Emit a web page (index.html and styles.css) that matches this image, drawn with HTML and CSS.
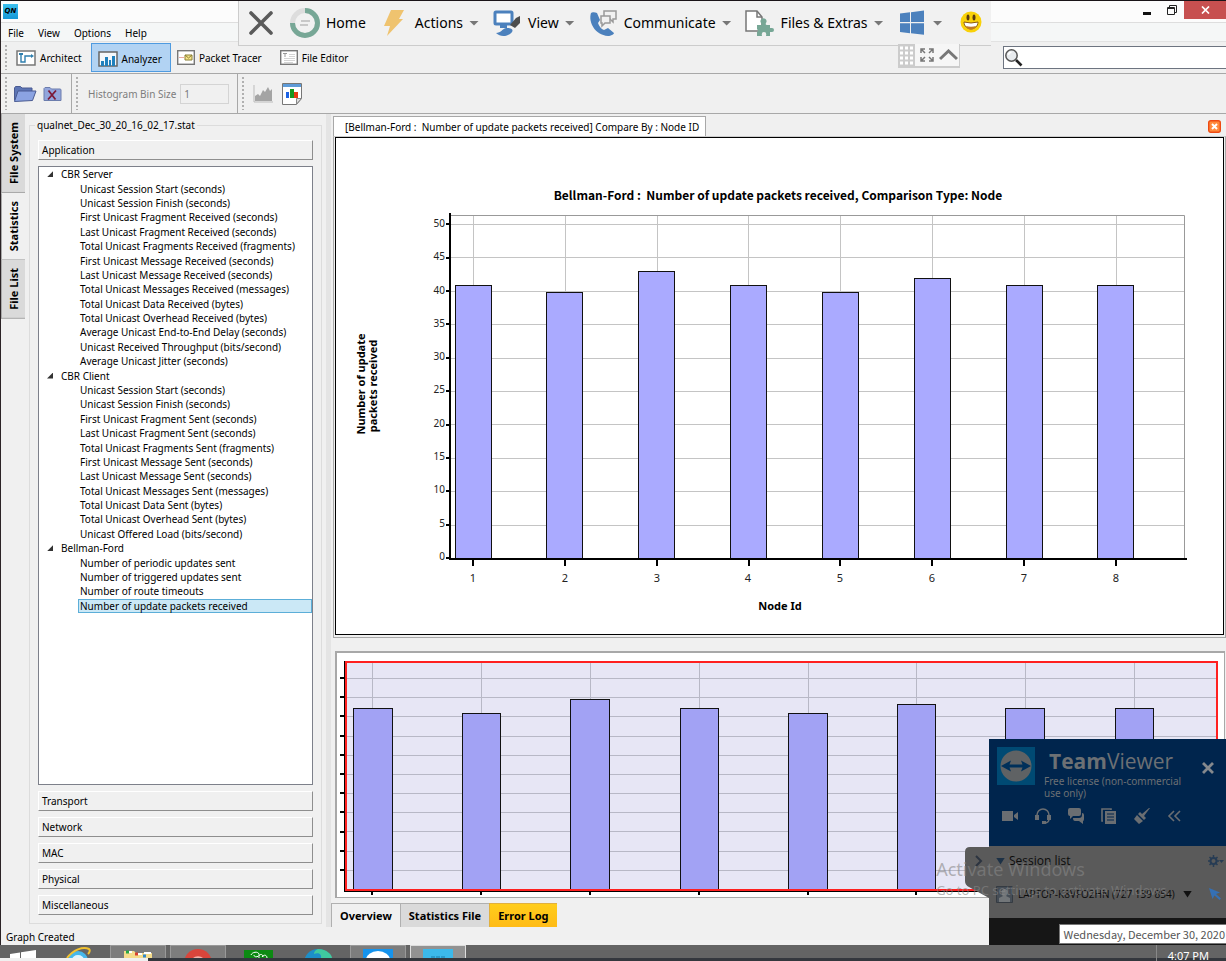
FILE: index.html
```html
<!DOCTYPE html>
<html lang="en">
<head>
<meta charset="utf-8">
<title>QualNet Analyzer</title>
<link rel="stylesheet" href="styles.css">
</head>
<body>
<div class="desktop">
<div class="window">
  <header class="titlebar">
    <span class="app-logo">QN</span>
    <div class="window-buttons">
      <button class="win-btn" aria-label="Minimize"><svg width="8" height="14" viewBox="0 0 8 14"><path d="M0 10.500h8" stroke="#111" stroke-width="3"/></svg></button>
      <button class="win-btn" aria-label="Restore"><svg width="10" height="10" viewBox="0 0 10 10"><path d="M2.500 2.500v-2h7v7h-2" fill="none" stroke="#222"/><path d="M.5 2.500h7v7h-7z M.5 3.500h7" fill="none" stroke="#222"/></svg></button>
      <button class="win-btn win-close" aria-label="Close"><svg width="9" height="8" viewBox="0 0 9 8"><path d="M1 .5l7 7M8 .5l-7 7" stroke="#fff" stroke-width="1.700"/></svg></button>
    </div>
  </header>
  <nav class="menubar">
    <button>File</button><button>View</button><button>Options</button><button>Help</button>
  </nav>
  <div class="modebar">
    <span class="grip"></span>
    <button class="mode mode-architect"><svg width="20" height="16" viewBox="0 0 20 16"><rect x="1" y="1" width="18" height="14" fill="#fff" stroke="#777" stroke-width="1.500"/><path d="M5 4v8h4V6h7" fill="none" stroke="#2f7fae" stroke-width="1.400"/><path d="M3 3h4v2H3zM15 4l3 2-3 2z" fill="#2f7fae"/></svg>Architect</button>
    <button class="mode mode-active"><svg width="20" height="16" viewBox="0 0 20 16"><rect x="1" y="1" width="18" height="14" fill="#f4f8fb" stroke="#666" stroke-width="1.500"/><path d="M3 10h3v5H3zM7 6h3v9H7zM11 9h2v6h-2zM14 5h3v10h-3z" fill="#1f80bd"/></svg>Analyzer</button>
    <button class="mode"><svg width="18" height="15" viewBox="0 0 18 15"><rect x=".7" y=".7" width="16.600" height="13.600" fill="#fff" stroke="#777" stroke-width="1.400"/><path d="M2 7.500h5" stroke="#e9a9a0"/><path d="M8 5h7v5H8z" fill="#f6e58a" stroke="#8a7f35"/><path d="M8 5l3.500 3L15 5" fill="none" stroke="#8a7f35"/></svg>Packet Tracer</button>
    <button class="mode mode-editor"><svg width="18" height="15" viewBox="0 0 18 15"><rect x=".7" y=".7" width="16.600" height="13.600" fill="#fff" stroke="#777" stroke-width="1.400"/><path d="M3 3.500h4M5 3.500V7" stroke="#999"/><path d="M9 4.500h6M9 6.500h6M4 8.500h11M4 10.500h11M4 12.500h9" stroke="#d4d4d4"/></svg>File Editor</button>
    <label class="search" aria-label="Search">
      <svg width="19" height="19" viewBox="0 0 19 19"><path d="M12 12l5.500 5.500" stroke="#222" stroke-width="2.600"/><circle cx="7.500" cy="7.500" r="5.700" fill="#e8ebee" stroke="#555" stroke-width="1.500"/><path d="M4.500 7a3.200 3.200 0 0 1 3-2.800" fill="none" stroke="#fff" stroke-width="1.500"/></svg>
      <input type="text">
    </label>
  </div>
  <div class="toolbar">
    <div class="tool-group tool-files">
      <span class="grip"></span>
      <button class="tool" aria-label="Open folder"><svg width="24" height="18" viewBox="0 0 24 18"><path d="M1.500 15.500V3l1-1.500h5L9 3h10v3" fill="#5d75b5" stroke="#4a5b92"/><path d="M1.500 16.500L5 6h18l-3.500 9.500z" fill="#8ba3e2" stroke="#4a5b92"/></svg></button>
      <button class="tool" aria-label="Close folder"><svg width="19" height="16" viewBox="0 0 19 16"><path d="M1 14.500V2.500L2 1.500h5l1.500 1.500H17a1 1 0 0 1 1 1v10.500z" fill="#93a5dc" stroke="#6c7dad"/><path d="M5.500 4.500l7 9M13 4.500l-8 9" stroke="#7c1a38" stroke-width="1.800"/></svg></button>
    </div>
    <div class="tool-group tool-bins">
      <span class="grip"></span>
      <label for="bins">Histogram Bin Size</label>
      <input id="bins" class="bins" type="text" value="1" disabled>
    </div>
    <div class="tool-group tool-charts">
      <span class="grip"></span>
      <button class="tool" aria-label="Area chart"><svg width="20" height="18" viewBox="0 0 20 18"><path d="M1 0v17h19" fill="none" stroke="#bbb"/><path d="M2 16v-5l3-2 2 2 3-6 2 2 3-5 2 4 2-2v12z" fill="#a4a4a4"/></svg></button>
      <button class="tool" aria-label="Bar chart report"><svg width="20" height="22" viewBox="0 0 20 22"><path d="M.5.500h19v15l-5 6H.5z" fill="#fff" stroke="#777"/><path d="M1 1h18v3H1z" fill="#5e9bd8"/><path d="M4 9h3v6H4z" fill="#1c62e4"/><path d="M8 6h4v9H8z" fill="#15961f"/><path d="M12 9h4v6h-4z" fill="#e33a12"/><path d="M14.500 21v-5.500h5z" fill="#ddd" stroke="#888"/></svg></button>
    </div>
  </div>

  <main class="workspace">
    <div class="side-tabs">
      <button>File System</button>
      <button class="side-on">Statistics</button>
      <button>File List</button>
    </div>
    <fieldset class="stats">
      <legend>qualnet_Dec_30_20_16_02_17.stat</legend>
      <button class="layer">Application</button>
      <div class="tree-box">
        <ul class="tree">
          <li><span class="branch">CBR Server</span>
            <ul>
              <li><span>Unicast Session Start (seconds)</span></li>
              <li><span>Unicast Session Finish (seconds)</span></li>
              <li><span>First Unicast Fragment Received (seconds)</span></li>
              <li><span>Last Unicast Fragment Received (seconds)</span></li>
              <li><span>Total Unicast Fragments Received (fragments)</span></li>
              <li><span>First Unicast Message Received (seconds)</span></li>
              <li><span>Last Unicast Message Received (seconds)</span></li>
              <li><span>Total Unicast Messages Received (messages)</span></li>
              <li><span>Total Unicast Data Received (bytes)</span></li>
              <li><span>Total Unicast Overhead Received (bytes)</span></li>
              <li><span>Average Unicast End-to-End Delay (seconds)</span></li>
              <li><span>Unicast Received Throughput (bits/second)</span></li>
              <li><span>Average Unicast Jitter (seconds)</span></li>
            </ul></li>
          <li><span class="branch">CBR Client</span>
            <ul>
              <li><span>Unicast Session Start (seconds)</span></li>
              <li><span>Unicast Session Finish (seconds)</span></li>
              <li><span>First Unicast Fragment Sent (seconds)</span></li>
              <li><span>Last Unicast Fragment Sent (seconds)</span></li>
              <li><span>Total Unicast Fragments Sent (fragments)</span></li>
              <li><span>First Unicast Message Sent (seconds)</span></li>
              <li><span>Last Unicast Message Sent (seconds)</span></li>
              <li><span>Total Unicast Messages Sent (messages)</span></li>
              <li><span>Total Unicast Data Sent (bytes)</span></li>
              <li><span>Total Unicast Overhead Sent (bytes)</span></li>
              <li><span>Unicast Offered Load (bits/second)</span></li>
            </ul></li>
          <li><span class="branch">Bellman-Ford</span>
            <ul>
              <li><span>Number of periodic updates sent</span></li>
              <li><span>Number of triggered updates sent</span></li>
              <li><span>Number of route timeouts</span></li>
              <li><span class="picked">Number of update packets received</span></li>
            </ul></li>
        </ul>
      </div>
      <button class="layer">Transport</button>
      <button class="layer">Network</button>
      <button class="layer">MAC</button>
      <button class="layer">Physical</button>
      <button class="layer">Miscellaneous</button>
    </fieldset>
    <div class="splitter"></div>

    <section class="graphs">
      <div class="graph-tabs">
        <button class="graph-tab">[Bellman-Ford :&nbsp; Number of update packets received] Compare By : Node ID</button>
        <button class="graph-close" aria-label="Close graph"><svg width="13" height="13" viewBox="0 0 13 13"><rect x=".7" y=".7" width="11.600" height="11.600" rx="2" fill="#ff8a3c" stroke="#ee4a12" stroke-width="1.400"/><path d="M4 4l5 5M9 4l-5 5" stroke="#fff" stroke-width="2"/></svg></button>
      </div>
      <div class="graph-frame">
        <svg class="chart" viewBox="336 138 887 496" role="img" aria-label="Update packets received by node">
          <g class="grid">
            <path d="M451 224.500H1184M451 257.500H1184M451 291.500H1184M451 324.500H1184M451 358.500H1184M451 391.500H1184M451 424.500H1184M451 458.500H1184M451 491.500H1184M451 525.500H1184"/>
            <path d="M473.500 216V558M565.500 216V558M657.500 216V558M748.500 216V558M840.500 216V558M932.500 216V558M1024.500 216V558M1116.500 216V558"/>
          </g>
          <path class="plot-edge" d="M451 215.500H1184.500V558"/>
          <g class="bars">
            <rect x="455.500" y="285.500" width="36" height="273"/><rect x="546.500" y="292.500" width="36" height="266"/><rect x="638.500" y="271.500" width="36" height="287"/><rect x="730.500" y="285.500" width="36" height="273"/><rect x="822.500" y="292.500" width="36" height="266"/><rect x="914.500" y="278.500" width="36" height="280"/><rect x="1006.500" y="285.500" width="36" height="273"/><rect x="1097.500" y="285.500" width="36" height="273"/>
          </g>
          <path class="axis" d="M450 213V560M449 559H1187M446 224H450M446 258H450M446 291H450M446 324H450M446 358H450M446 391H450M446 425H450M446 458H450M446 491H450M446 525H450M446 558H450M473 559V566M565 559V566M657 559V566M749 559V566M840 559V566M932 559V566M1024 559V566M1116 559V566"/>
          <g class="ticks ticks-y">
            <text x="445" y="227">50</text><text x="445" y="260">45</text><text x="445" y="294">40</text><text x="445" y="327">35</text><text x="445" y="360">30</text><text x="445" y="393">25</text><text x="445" y="427">20</text><text x="445" y="460">15</text><text x="445" y="493">10</text><text x="445" y="527">5</text><text x="445" y="560">0</text>
          </g>
          <g class="ticks">
            <text x="473" y="582">1</text><text x="565" y="582">2</text><text x="657" y="582">3</text><text x="748" y="582">4</text><text x="840" y="582">5</text><text x="932" y="582">6</text><text x="1024" y="582">7</text><text x="1116" y="582">8</text>
          </g>
          <g class="titles">
            <text class="chart-title" x="778" y="200">Bellman-Ford :&#160; Number of update packets received, Comparison Type: Node</text>
            <text x="780" y="610">Node Id</text>
            <text transform="rotate(-90)" x="-384" y="365">Number of update</text>
            <text transform="rotate(-90)" x="-386" y="377">packets received</text>
          </g>
        </svg>
      </div>
      <div class="overview">
        <svg class="chart" viewBox="337 653 887 244" role="img" aria-label="Graph overview">
          <path class="shade" d="M346 662H1217V889H346z"/>
          <g class="grid">
            <path d="M346 678.500H1217M346 697.500H1217M346 716.500H1217M346 736.500H1217M346 755.500H1217M346 774.500H1217M346 793.500H1217M346 812.500H1217M346 831.500H1217M346 851.500H1217M346 870.500H1217"/>
            <path d="M372.500 662V889M481.500 662V889M590.500 662V889M699.500 662V889M808.500 662V889M916.500 662V889M1025.500 662V889M1134.500 662V889"/>
          </g>
          <g class="bars bars-dim">
            <rect x="353.500" y="708.500" width="39" height="181"/><rect x="462.500" y="713.500" width="38" height="176"/><rect x="570.500" y="699.500" width="39" height="190"/><rect x="680.500" y="708.500" width="38" height="181"/><rect x="788.500" y="713.500" width="39" height="176"/><rect x="897.500" y="704.500" width="38" height="185"/><rect x="1005.500" y="708.500" width="39" height="181"/><rect x="1115.500" y="708.500" width="38" height="181"/>
          </g>
          <path class="axis" d="M345 661V891H1217M340 678H345M340 697H345M340 716H345M340 736H345M340 755H345M340 774H345M340 793H345M340 812H345M340 832H345M340 851H345M340 870H345M372 890V895M481 890V895M590 890V895M699 890V895M808 890V895M916 890V895"/>
          <rect class="view-range" x="346" y="662" width="871" height="228"/>
        </svg>
      </div>
      <div class="bottom-tabs">
        <button class="bottom-on">Overview</button><button>Statistics File</button><button class="bottom-alert">Error Log</button>
      </div>
    </section>
  </main>
  <footer class="status">Graph Created</footer>
</div>

<div class="taskbar">
  <button class="task" aria-label="Start"><svg width="28" height="12" viewBox="0 0 28 12"><path d="M1 8l10-1.500V12H1zM12 6.300L27 4v8H12z" fill="#fff"/></svg></button>
  <button class="task" aria-label="Internet Explorer"><svg width="28" height="12" viewBox="0 0 28 12"><circle cx="14" cy="15" r="10" fill="#45b7ea"/><path d="M8 14a6 5 0 0 1 12 0z" fill="#dff3fc"/><path d="M3 12C9 4 19 0 25 3c2 2-1 5-1 5" fill="none" stroke="#f2c230" stroke-width="2"/></svg></button>
  <button class="task task-open" aria-label="File Explorer"><svg width="32" height="9" viewBox="0 3 32 9"><path d="M2 12V5h10l2 2h16v5z" fill="#f5dc8b"/><path d="M4 6h6M15 8h5M22 7h7" stroke="#fff" stroke-width="2"/><path d="M4 6h3" stroke="#27a845" stroke-width="3"/><path d="M13 8h3" stroke="#d8412f" stroke-width="3"/><path d="M21 10h3" stroke="#3288cc" stroke-width="3"/></svg></button>
  <button class="task task-open" aria-label="Browser"><svg width="28" height="10" viewBox="0 2 28 10"><circle cx="14" cy="17" r="14" fill="#d9453b"/><path d="M9 12a6 4 0 0 1 10 0z" fill="#f2b3ac"/></svg></button>
  <button class="task" aria-label="Notes"><svg width="29" height="12" viewBox="0 0 29 12"><path d="M0 4h29v8H0z" fill="#0c8a12"/><path d="M7 9c1-3 7-4 8-1s-5 4-5 1M15 12c-1-4 4-5 4-1M18 11c2-3 5-2 5 1" fill="none" stroke="#fff"/></svg></button>
  <button class="task" aria-label="Edge"><svg width="29" height="12" viewBox="0 0 29 12"><circle cx="14" cy="17" r="14" fill="#1c8fc9"/><path d="M14 3c9 0 14 6 14 9H17c1-4-3-6-7-4 0-2 1-4 4-5z" fill="#3fc9a0"/></svg></button>
  <button class="task task-open" aria-label="TeamViewer"><svg width="30" height="10" viewBox="0 2 30 10"><path d="M0 3h30v9H0z" fill="#1593ec"/><ellipse cx="15" cy="14" rx="12" ry="9" fill="#fff"/></svg></button>
  <button class="task task-open task-front" aria-label="QualNet"><svg width="30" height="10" viewBox="0 2 30 10"><path d="M0 3h30v9H0z" fill="#3cb9ea"/><path d="M8 11h14" stroke="#2a9bcb" stroke-width="2" stroke-dasharray="4 1"/></svg></button>
  <time class="clock">4:07 PM</time>
</div>

<div class="session-bar">
  <button class="sess sess-end" aria-label="Close session"><svg viewBox="0 0 24 24"><path d="M2 2l20 20M22 2L2 22" stroke="#5a5a5a" stroke-width="3.600" stroke-linecap="round"/></svg></button>
  <button class="sess"><svg class="sess-icon" viewBox="0 0 30 30"><circle cx="15" cy="15" r="12.500" fill="none" stroke="#ddd" stroke-width="5"/><path d="M15 2.500A12.500 12.500 0 1 1 2.500 15" fill="none" stroke="#77a796" stroke-width="5"/><path d="M11 13h9M10 17h8" stroke="#bbb" stroke-width="1.500"/></svg>Home</button>
  <button class="sess"><svg class="sess-icon" viewBox="0 0 30 30"><path d="M12 2h13l-5 9h4L8 28l3-10H5z" fill="#efc36f"/></svg>Actions<i class="caret"></i></button>
  <button class="sess"><svg class="sess-icon" viewBox="0 0 30 30"><rect x="3" y="4" width="17" height="12" rx="1" fill="#fff" stroke="#4c81bd" stroke-width="3"/><path d="M8 17h7v3H8z" fill="#4c81bd"/><path d="M4 25c5 0 6-4 10-5 4-.5 8 1 6 4-3 4-11 6-16 1z" fill="#4c81bd"/><path d="M18 17l6-7 4-2v7l-5 5z" fill="#4d4d4d"/></svg>View<i class="caret"></i></button>
  <button class="sess"><svg class="sess-icon" viewBox="0 0 30 30"><path d="M3 5c-3 9 4 22 17 23 3 0 6-2 6-3l-6-5-4 2c-3-1-5-4-6-7l2-3-3-7c-2-1-5-1-6 0z" fill="#4c81bd"/><path d="M16 3h12v8h-3v3l-3-3h-6z" fill="#f1f1f1" stroke="#999" stroke-width="1.500"/><path d="M13 8h9v7h-5l-3 3v-3h-1z" fill="#f1f1f1" stroke="#999" stroke-width="1.500"/></svg>Communicate<i class="caret"></i></button>
  <button class="sess"><svg class="sess-icon" viewBox="0 0 30 30"><path d="M1 3h11l5 6v14H1z" fill="#fff" stroke="#777" stroke-width="1.500"/><path d="M12 3v6h5" fill="none" stroke="#777" stroke-width="1.500"/><path d="M12 17h4q1 0 0-2a3 3 0 1 1 5 0q-1 2 1 2h3v3h2a2 2 0 1 1 0 4h-2v4h-4q1-4-2-4t-2 4h-5v-4q2-1 0-3z" fill="#77a796"/></svg>Files &amp; Extras<i class="caret"></i></button>
  <button class="sess" aria-label="Windows keys"><svg class="sess-icon" viewBox="0 0 30 30"><path d="M3 5.500l10-1.200V14H3zM14 4.200L27 2.500V14H14zM3 15.200h10v10L3 24zM14 15.200h13v11.500l-13-1.500z" fill="#4c81bd"/></svg><i class="caret"></i></button>
  <button class="sess" aria-label="Feedback"><svg class="sess-icon" viewBox="0 0 30 30"><circle cx="15" cy="14" r="10.500" fill="#f9d108"/><ellipse cx="12" cy="9.500" rx="1.500" ry="3" fill="#5a3a10"/><ellipse cx="18" cy="9.500" rx="1.500" ry="3" fill="#5a3a10"/><path d="M8 14q7 2 14 0c0 9-14 9-14 0z" fill="#fff" stroke="#8a5a14"/><path d="M10 18c3 1 7 1 10 0-2 5-8 5-10 0z" fill="#c07a20"/></svg></button>
  <div class="session-pins">
    <svg width="17" height="22" viewBox="0 0 17 22"><path d="M0 0h17v22H0z" fill="#ccc"/><path d="M2 4h13M2 9h13M2 14h13M2 19h13" stroke="#fff" stroke-width="3" stroke-dasharray="3 2"/></svg>
    <svg width="14" height="14" viewBox="0 0 14 14"><path d="M1 5V1h4M9 1h4v4M13 9v4H9M5 13H1V9M1 1l4 4M13 1L9 5M13 13L9 9M1 13l4-4" fill="none" stroke="#777" stroke-width="1.500"/></svg>
    <svg width="19" height="12" viewBox="0 0 19 12"><path d="M1 10l8.500-8L18 10" fill="none" stroke="#777" stroke-width="3"/></svg>
  </div>
</div>

<aside class="tv">
  <button class="tv-handle" aria-label="Collapse panel"><svg width="24" height="52" viewBox="0 0 24 52"><path d="M24 0H5Q0 0 0 5V34q0 4 4 6l20 11z" fill="#5a5a5a"/><path d="M11 9l5 5-5 5" fill="none" stroke="#2c3440" stroke-width="2"/></svg></button>
  <div class="tv-head">
    <svg class="tv-logo" width="38" height="38" viewBox="0 0 38 38"><path d="M0 0h38v38H0z" fill="#004a73"/><circle cx="19" cy="19" r="15.500" fill="#5f6264"/><path d="M4 19l10-5.500-1.500 4h13L24 13.500 34 19l-10 5.500 1.500-4h-13l1.500 4z" fill="#00305a"/></svg>
    <div class="tv-name"><h2><b>Team</b>Viewer</h2><p>Free license (non-commercial use only)</p></div>
    <button class="tv-close" aria-label="Close"><svg width="12" height="12" viewBox="0 0 12 12"><path d="M1 1l10 10M11 1L1 11" stroke="#85898d" stroke-width="2.800"/></svg></button>
    <div class="tv-tools">
      <svg viewBox="0 0 18 18"><path d="M1 4h11v10H1zM13 8l4-3v8l-4-3z" fill="#6a6e72"/></svg>
      <svg viewBox="0 0 18 18"><path d="M3 11V8a6 6 0 0 1 12 0v4q0 4-5 4" fill="none" stroke="#6a6e72" stroke-width="1.500"/><path d="M1 8h4v5H1zM13 8h4v5h-4zM8 14h4v3H8z" fill="#6a6e72"/></svg>
      <svg viewBox="0 0 18 18"><path d="M3 1h9q2 0 2 2v4q0 2-2 2H6l-3 3V9Q1 9 1 7V3q0-2 2-2z" fill="#6a6e72"/><path d="M15 6q2 0 2 2v4q0 2-1 2v3l-4-3H8q-2 0-2-3h6q3 0 3-3z" fill="#6a6e72"/></svg>
      <svg viewBox="0 0 18 18"><path d="M3 14H2V2h9v1" fill="none" stroke="#6a6e72" stroke-width="1.600"/><path d="M5 4h11v13H5z" fill="#6a6e72"/><path d="M7 7h7M7 10h7M7 13h7" stroke="#00254d"/></svg>
      <svg viewBox="0 0 18 18"><path d="M17 1l-6 8 2 2-2 2-6-6 2-2 2 2 7-6zM4 8l6 6-4 3-5-5z" fill="#6a6e72"/></svg>
      <svg viewBox="0 0 18 18"><path d="M8 4l-5 5 5 5M14 4L9 9l5 5" fill="none" stroke="#6a6e72" stroke-width="1.600"/></svg>
    </div>
  </div>
  <div class="tv-body">
    <div class="tv-row"><i class="tri"></i><span class="tv-list">Session list</span><svg width="16" height="12" viewBox="0 0 16 12"><circle cx="5.500" cy="6" r="3" fill="none" stroke="#273c54" stroke-width="2"/><path d="M5.500 0v3M5.500 9v3M0 6h2M8 6h3M1.500 2l2 2M9.500 2l-2 2M1.500 10l2-2M9.500 10l-2-2" stroke="#273c54" stroke-width="1.500"/><path d="M11 5h5l-2.500 3z" fill="#273c54"/></svg></div>
    <div class="tv-row tv-peer"><svg width="17" height="17" viewBox="0 0 17 17"><path d="M.5.500h16v16H.5z" fill="#454d56" stroke="#353b42"/><path d="M8.500 3c5 0 3 6 1.500 7l4 2v4H3v-4l4-2C5.500 9 4 3 8.500 3z" fill="#727679"/></svg><span class="tv-host">LAPTOP-K8VFO2HN (727 139 854)</span><i class="tri tri-dark"></i><svg width="12" height="12" viewBox="0 0 12 12"><path d="M0 0l11 4.500-4 1.500 5 4.500-1.500 1.500L5.500 7.500 3.500 11z" fill="#3570b5"/></svg></div>
  </div>
  <div class="tv-foot"></div>
</aside>
<div class="activation"><strong>Activate Windows</strong><span>Go to PC settings to activate Windows.</span></div>
<div class="date-tip">Wednesday, December 30, 2020</div>
</div>
</body>
</html>
```
FILE: styles.css
```css
* { box-sizing: border-box; }

body {
  margin: 0;
  background: #34373d;
  color: #000;
  font: 10px/14px "Noto Sans", "Open Sans", sans-serif;
}

button, input {
  margin: 0;
  padding: 0;
  border: 0;
  background: none;
  color: inherit;
  font: inherit;
}

svg { display: block; flex: none; }

.desktop {
  position: relative;
  min-height: 100vh;
  display: flex;
  flex-direction: column;
  overflow: hidden;
}

.window {
  flex: 1;
  display: flex;
  flex-direction: column;
  background: #f0f0f0;
  border-top: 1px solid #1a1418;
  border-left: 1px solid #2b2326;
}

/* Title and menus */
.titlebar {
  display: flex;
  justify-content: space-between;
  align-items: flex-start;
  height: 22px;
  background: #fcfcfc;
  border-bottom: 1px solid #dedede;
}

.app-logo {
  margin: 3px 0 0 2px;
  width: 15px;
  height: 15px;
  background: linear-gradient(#3cc0ee, #1597d6);
  font: italic bold 7px/15px "DejaVu Sans", sans-serif;
  text-align: center;
}

.window-buttons { display: flex; }

.win-btn {
  width: 25px;
  height: 18px;
  display: flex;
  align-items: center;
  justify-content: center;
}

.win-close { width: 42px; background: #c75050; }

.menubar {
  display: flex;
  gap: 14px;
  height: 19px;
  padding: 1px 0 0 7px;
  background: #f5f7f7;
  border-bottom: 1px solid #e2e2e2;
}

.modebar {
  display: flex;
  align-items: center;
  height: 32px;
  padding-left: 4px;
  border-bottom: 1px solid #a8a8a8;
}

.grip {
  width: 2px;
  align-self: stretch;
  margin: 3px 0;
  background: repeating-linear-gradient(#b0b0b0 0 2px, transparent 2px 4px);
}

.mode {
  height: 29px;
  display: flex;
  align-items: center;
  gap: 4px;
  padding: 0 6px;
  white-space: nowrap;
}

.mode-architect { padding: 0 9px; }
.mode-active { background: #b2d3f3; border: 1px solid #4f9be0; padding: 2px 8px 0 6px; }
.mode-editor { padding-left: 12px; }

.search {
  display: flex;
  align-items: center;
  margin-left: auto;
  width: 223px;
  height: 23px;
  border: 1px solid #6d7480;
  border-right: 0;
  background: #fff;
}

.search input { flex: 1; min-width: 0; height: 100%; outline: 0; }

.toolbar { display: flex; height: 40px; border-bottom: 1px solid #a8a8a8; }

.tool-group {
  display: flex;
  align-items: center;
  padding-left: 4px;
  border-right: 1px solid #a8a8a8;
}

.tool-files { gap: 6px; padding-right: 9px; }
.tool-bins { gap: 4px; padding: 0 8px 0 4px; color: #7d7d7d; }
.tool-bins label { margin-left: 6px; }
.tool-charts { gap: 9px; border-right: 0; }

.bins {
  width: 49px;
  height: 20px;
  padding-left: 3px;
  border: 1px solid #d4d4d4;
  color: #777;
}

/* Workspace */
.workspace { flex: 1; display: flex; min-height: 0; }

.side-tabs { width: 24px; display: flex; flex-direction: column; }

.side-tabs button {
  writing-mode: vertical-rl;
  transform: rotate(180deg);
  width: 24px;
  padding: 8px 5px;
  background: #dadada;
  border: 1px solid #a9a9a9;
  border-width: 1px 1px 0 0;
  font-size: 11px;
  font-weight: bold;
}

.side-tabs .side-on { background: #f0f0f0; }

.stats {
  width: 293px;
  min-width: 0;
  margin: 4px 0 3px 4px;
  padding: 8px;
  border: 1px solid #dcdcdc;
  display: flex;
  flex-direction: column;
  gap: 6px;
}

.stats legend { padding: 0 2px; margin-left: -3px; }

.layer {
  height: 20px;
  padding-left: 3px;
  text-align: left;
  border: 1px solid #fff;
  border-right-color: #8e8e8e;
  border-bottom-color: #8e8e8e;
}

.tree-box { flex: 1; background: #fff; border: 1px solid #7d808a; }

.tree {
  height: 446px;
  display: grid;
  grid-auto-rows: 1fr;
}

.tree, .tree ul { list-style: none; margin: 0; padding: 0; }
.tree li, .tree ul { display: contents; }

.tree span {
  display: flex;
  align-items: center;
  margin-left: 39px;
  padding-left: 2px;
  white-space: nowrap;
}

.tree .branch { margin-left: 8px; gap: 8px; padding: 0; }

.branch::before {
  content: "";
  width: 6px;
  height: 6px;
  background: #333;
  clip-path: polygon(100% 0, 100% 100%, 0 100%);
}

.tree .picked { background: #cbe8f6; box-shadow: inset 0 0 0 1px #5caed8; }

.splitter { width: 5px; margin: 0 2px 0 4px; background: #e4e4e4; }

.graphs { flex: 1; min-width: 0; display: flex; flex-direction: column; padding-top: 2px; }

.graph-tabs { display: flex; justify-content: space-between; padding-right: 5px; }

.graph-tab {
  height: 20px;
  padding: 0 6px 0 11px;
  background: #fff;
  border: 1px solid #a8a8a8;
  border-bottom: 0;
  white-space: nowrap;
}

.graph-close { display: flex; align-items: center; }

.graph-frame {
  border: 1px solid #a8a8a8;
  border-top-color: #ccc;
  padding: 0 1px 2px;
}

.graph-frame .chart { border: 1px solid #000; background: #fff; }

.chart { width: 100%; height: auto; }

.grid path { fill: none; stroke: #c4c4c4; }
.plot-edge { fill: none; stroke: #999; }
.bars rect { fill: #aaaaff; stroke: #111; }
.bars-dim rect { fill: #a2a2f4; }
.axis { fill: none; stroke: #000; stroke-width: 2; }
.shade { fill: #e7e6f5; }
.overview .grid path { stroke: #b8b8c6; }
.view-range { fill: none; stroke: #ff2020; stroke-width: 2; }
.ticks { text-anchor: middle; fill: #222; font-size: 11px; }
.ticks-y { text-anchor: end; font-size: 10px; }
.titles { text-anchor: middle; font-size: 11px; font-weight: bold; }
.chart-title { font: bold 12px "Noto Sans CJK SC", "Noto Sans", sans-serif; }

.overview {
  margin: 13px 1px 5px 2px;
  border: 2px solid #a8a8a8;
  border-width: 2px 1px 1px 2px;
  background: #fff;
}

.bottom-tabs { display: flex; margin-left: -2px; }

.bottom-tabs button {
  height: 24px;
  padding: 0 8px;
  background: #dadada;
  border: 1px solid #b0b0b0;
  border-width: 1px 0 0 1px;
  font-size: 11px;
  font-weight: bold;
}

.bottom-tabs .bottom-on { background: #f0f0f0; }
.bottom-tabs .bottom-alert { background: linear-gradient(#ffcd1c, #ffbb16); border-color: #e0b040; }

.status { height: 18px; padding: 3px 5px 0; }

/* Taskbar */
.taskbar {
  position: relative;
  display: flex;
  gap: 4px;
  height: 16px;
  overflow: hidden;
  background: linear-gradient(#646464 13px, #34373d 13px);
}

.taskbar::after {
  content: "";
  position: absolute;
  left: 0;
  bottom: 0;
  width: 148px;
  height: 3px;
  background: #f0f0f0;
}

.task {
  width: 56px;
  height: 13px;
  display: flex;
  justify-content: center;
  align-items: flex-end;
}

.task:first-child { width: 46px; }
.task-open { background: #7d7d7d; border: 1px solid #999; border-bottom: 0; }
.task-front { background: #929292; border-color: #ddd; }

.clock {
  margin-left: auto;
  padding: 3px 17px 0 11px;
  border-left: 1px solid #888;
  color: #fff;
  font: 11px/16px "Noto Sans", sans-serif;
}

/* Remote session toolbar */
.session-bar {
  position: absolute;
  left: 238px;
  top: 1px;
  height: 45px;
  display: flex;
  align-items: center;
  gap: 13px;
  padding: 0 5px 0 10px;
  background: #f1f1f1;
  border: 1px solid #ccc;
  border-width: 0 0 1px 1px;
  font-size: 14px;
  line-height: 20px;
}

.sess { display: flex; align-items: center; gap: 6px; white-space: nowrap; }
.sess-end { width: 26px; margin-right: 2px; }
.sess-end svg { width: 24px; height: 24px; }
.sess-icon { width: 30px; height: 30px; }

.caret {
  width: 10px;
  height: 5px;
  background: #777;
  clip-path: polygon(0 0, 100% 0, 50% 100%);
}

.session-pins {
  position: absolute;
  right: 31px;
  top: 43px;
  display: flex;
  align-items: center;
  gap: 5px;
  padding-right: 1px;
  background: #f6f6f6;
  border: 1px solid #ccc;
  border-width: 0 1px 2px 0;
}

/* Remote session panel */
.tv {
  position: absolute;
  right: 0;
  bottom: 16px;
  width: 237px;
  font-family: "Open Sans", sans-serif;
}

.tv-handle { position: absolute; left: -24px; top: 108px; }

.tv-head {
  display: grid;
  grid-template-columns: 38px 1fr 12px;
  align-content: start;
  column-gap: 9px;
  height: 107px;
  padding: 8px 12px 0 8px;
  background: #00254d;
  color: #6c7074;
}

.tv-name h2 { margin: 0 0 0 5px; font: 21px/28px "Open Sans", sans-serif; }
.tv-name p { margin: 0; font: 10px/12px "Noto Sans", sans-serif; }
.tv-close { align-self: start; margin-top: 15px; }

.tv-tools {
  grid-column: 1 / -1;
  display: flex;
  gap: 15px;
  padding: 8px 4px;
}

.tv-tools svg { width: 18px; height: 18px; }

.tv-body { height: 72px; padding: 3px 2px 0 7px; background: #5a5a5a; color: #0c0c0c; }
.tv-row { display: flex; align-items: center; gap: 4px; height: 24px; font: 12px/16px "Open Sans", sans-serif; }
.tv-peer { height: 42px; padding-right: 3px; gap: 5px; font-size: 10px; }
.tv-list, .tv-host { flex: 1; white-space: nowrap; }

.tri {
  width: 9px;
  height: 7px;
  background: #1d3146;
  clip-path: polygon(0 0, 100% 0, 50% 100%);
}

.tri-dark { background: #111; margin-right: 12px; }

.tv-foot { height: 27px; background: #161616; }

.activation {
  position: absolute;
  right: 56px;
  bottom: 62px;
  display: flex;
  flex-direction: column;
  color: rgba(135, 135, 135, 0.6);
  pointer-events: none;
}

.activation strong { font-size: 18px; font-weight: normal; line-height: 24px; }
.activation span { font-size: 13px; line-height: 18px; }

.date-tip {
  position: absolute;
  right: 0;
  bottom: 17px;
  padding: 1px 1px 1px 4px;
  background: #fff;
  border: 1px solid #777;
  border-right: 0;
  color: #555;
  font: 11px/16px "Noto Sans CJK SC", "Noto Sans", sans-serif;
}
```
